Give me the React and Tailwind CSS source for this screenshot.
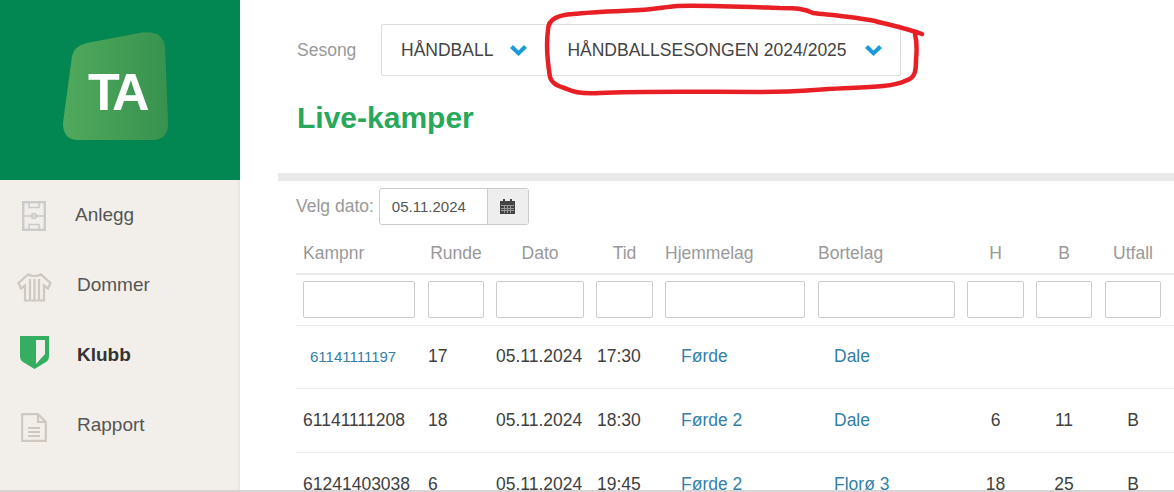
const rows = [
  { nr: '61141111197', link: true, runde: '17', dato: '05.11.2024', tid: '17:30', hjemme: 'Førde', borte: 'Dale', h: '', b: '', utfall: '', height: 'h-[63px]' },
  { nr: '61141111208', runde: '18', dato: '05.11.2024', tid: '18:30', hjemme: 'Førde 2', borte: 'Dale', h: '6', b: '11', utfall: 'B', height: 'h-[64px]' },
  { nr: '61241403038', runde: '6', dato: '05.11.2024', tid: '19:45', hjemme: 'Førde 2', borte: 'Florø 3', h: '18', b: '25', utfall: 'B', height: 'h-[64px]' },
];

const columns = [
  { label: 'Kampnr', width: 'w-[126px]', head: 'pl-[7px] text-left', pad: 'px-[7px]' },
  { label: 'Runde', width: 'w-[68px]', head: 'text-center', pad: 'px-[6px]' },
  { label: 'Dato', width: 'w-[100px]', head: 'text-center', pad: 'px-[6px]' },
  { label: 'Tid', width: 'w-[69px]', head: 'text-center', pad: 'px-[6px]' },
  { label: 'Hjemmelag', width: 'w-[153px]', head: 'pl-[6px] text-left', pad: 'pl-[6px] pr-[7px]' },
  { label: 'Bortelag', width: 'w-[149px]', head: 'pl-[6px] text-left', pad: 'px-[6px]' },
  { label: 'H', width: 'w-[69px]', head: 'text-center', pad: 'px-[6px]' },
  { label: 'B', width: 'w-[68px]', head: 'text-center', pad: 'px-[6px]' },
  { label: 'Utfall', width: 'w-[70px]', head: 'text-center', pad: 'px-[7px]' },
];

function NavItem({ icon, label, active, offset }) {
  return (
    <div className="flex h-[70px] items-center">
      <div className="flex w-[68px] justify-center">{icon}</div>
      <span className={`${offset} text-[19px] ${active ? 'font-bold text-[#333333]' : 'text-[#555555]'}`}>{label}</span>
    </div>
  );
}

function Chevron({ className }) {
  return (
    <svg width="17" height="11" viewBox="0 0 17 11" fill="#1a9bd7" className={className}>
      <path d="M0 3L3 0L8.5 5.5L14 0L17 3L8.5 11Z" />
    </svg>
  );
}

export default function App() {
  return (
    <div className="relative flex h-[492px] w-[1174px] overflow-hidden bg-white font-['Liberation_Sans',Arial,sans-serif]">
      {/* Sidebar */}
      <aside className="w-[240px] shrink-0 bg-[#f2efeb] shadow-[inset_-2px_0_2px_#e8e5e0]">
        <div className="flex h-[180px] items-center justify-center bg-[#038752] pb-[8px] pr-[9px]">
          <svg width="105" height="108" viewBox="0 0 105 108">
            <defs>
              <linearGradient id="logo" x1="0" x2="1" y1="0" y2="0">
                <stop offset="0" stopColor="#50a95c" />
                <stop offset="1" stopColor="#37924f" />
              </linearGradient>
            </defs>
            <path d="M24 11L79 0.5Q100 -2 102 15L105 91Q105 108 90 108L15 108Q0 108 0 91L9 24Q11 14 24 11Z" fill="url(#logo)" />
            <text x="25" y="78" fill="#fff" fontSize="52" fontWeight="700" letterSpacing="-4">TA</text>
          </svg>
        </div>
        <div>
          <NavItem label="Anlegg" offset="ml-[7px]" icon={
            <svg width="24" height="30" viewBox="0 0 24 30" fill="none" stroke="#cbcbcb" strokeWidth="2.4" className="mt-[2px]">
              <rect x="1.2" y="1.2" width="21.6" height="27.6" />
              <path d="M1 15H23M7 1V6.5H17V1M7 29V23.5H17V29" strokeWidth="1.6" />
              <circle cx="12" cy="15" r="2.5" strokeWidth="1.5" />
            </svg>
          } />
          <NavItem label="Dommer" offset="ml-[9px]" icon={
            <svg width="35" height="29" viewBox="0 0 35 29" fill="none" stroke="#cfc8c0" strokeWidth="2.2" className="mt-[4px]">
              <path d="M11 1.5L1.5 10L4 15.5L8 12.5V27.5H27V12.5L31 15.5L33.5 10L24 1.5C21 3.5 14 3.5 11 1.5Z" />
              <path d="M13 6V27.5M17.5 6V27.5M22 6V27.5" />
            </svg>
          } />
          <NavItem active label="Klubb" offset="ml-[9px]" icon={
            <svg width="29" height="33" viewBox="0 0 29 33" className="mb-[5px]">
              <path d="M0 0H29V20Q29 24 26 26L14.5 33L3 26Q0 24 0 20Z" fill="#36ae62" />
              <path d="M16 4H25V18L16 28Z" fill="#f2efeb" />
            </svg>
          } />
          <NavItem label="Rapport" offset="ml-[9px]" icon={
            <svg width="26" height="29" viewBox="0 0 26 29" fill="none" stroke="#cfc8c0" strokeWidth="2.2" className="mt-[4px]">
              <path d="M1.2 1.2H17L24.8 9V27.8H1.2Z" />
              <path d="M17 1.2V9H24.8M7 15H19M7 19H19M7 23H19" />
            </svg>
          } />
        </div>
      </aside>

      {/* Main */}
      <main className="flex-1 pl-[38px] pt-[24px]">
        <div className="flex items-center pl-[19px]">
          <span className="w-[84px] text-[17.5px] text-[#999999]">Sesong</span>
          <div className="flex h-[52px] w-[520px] items-center rounded-[2px] border border-[#dddddd] text-[17.5px] text-[#444444]">
            <span className="ml-[19px]">HÅNDBALL</span>
            <Chevron className="ml-[17px]" />
            <span className="ml-[40px]">HÅNDBALLSESONGEN 2024/2025</span>
            <Chevron className="ml-[18px]" />
          </div>
        </div>
        <h1 className="mt-[24px] pl-[19px] text-[30px] leading-[36px] font-bold text-[#27a85b]">Live-kamper</h1>

        <div className="mt-[37px] h-[8px] bg-[#e9e9e9]" />

        <div className="pl-[18px]">
          <div className="mt-[7px] flex items-center">
            <span className="text-[17.5px] text-[#999999]">Velg dato:</span>
            <div className="ml-[5px] flex h-[37px] w-[150px] rounded-[3px] border border-[#cccccc]">
              <span className="flex-1 pl-[12px] text-[15px] leading-[35px] text-[#555555]">05.11.2024</span>
              <span className="flex w-[41px] items-center justify-center border-l border-[#cccccc] bg-[#eeeeee]">
                <svg width="15" height="15" viewBox="0 0 15 15" fill="#444444">
                  <path d="M0 2H3V0H5V2H10V0H12V2H15V15H0Z" />
                  <path d="M1 6.5H14V7H1ZM1 9H14V9.5H1ZM1 11.5H14V12H1ZM4 6V14H4.5V6ZM7 6V14H7.5V6ZM10.5 6V14H11V6Z" fill="#eeeeee" />
                </svg>
              </span>
            </div>
          </div>

          <table className="mt-[8px] w-[878px] table-fixed border-collapse">
            <thead>
              <tr className="h-[41px] border-b-2 border-[#e9e9e9] text-[17.5px] text-[#999999]">
                {columns.map((c) => (
                  <th key={c.label} className={`${c.width} ${c.head} font-normal`}>{c.label}</th>
                ))}
                <th />
              </tr>
              <tr className="h-[51px] border-b border-[#e9e9e9]">
                {columns.map((c) => (
                  <td key={c.label} className={c.pad}>
                    <input className="block h-[37px] w-full rounded-[2px] border border-[#cccccc]" />
                  </td>
                ))}
                <td />
              </tr>
            </thead>
            <tbody className="text-[17.5px] text-[#404040]">
              {rows.map((r) => (
                <tr key={r.nr} className={`${r.height} border-b border-[#e9e9e9]`}>
                  <td className="pl-[7px]">
                    {r.link ? <span className="ml-[7px] text-[15px] text-[#337fa8]">{r.nr}</span> : r.nr}
                  </td>
                  <td className="pl-[6px]">{r.runde}</td>
                  <td className="pl-[6px]">{r.dato}</td>
                  <td className="pl-[7px]">{r.tid}</td>
                  <td className="pl-[22px] text-[#337fa8]">{r.hjemme}</td>
                  <td className="pl-[22px] text-[#337fa8]">{r.borte}</td>
                  <td className="text-center">{r.h}</td>
                  <td className="text-center">{r.b}</td>
                  <td className="text-center">{r.utfall}</td>
                  <td />
                </tr>
              ))}
            </tbody>
          </table>
        </div>
      </main>

      {/* Red marker annotation drawn over the screenshot */}
      <svg className="absolute left-0 top-0" width="1174" height="492" fill="none" stroke="#e81f25" strokeWidth="4.5" strokeLinecap="round" strokeLinejoin="round">
        <path d="M922 34C905 28 890 25 875 21C855 17 830 15 813 13C805 9 797 8 780 8C750 7 700 5 677 6C665 7 655 9 640 10C620 11 590 12 573 14C560 15 548 18 548 30C546 45 548 65 550 77C552 84 558 86 567 89C575 93 585 94 600 93C640 91 700 92 760 92C800 92 820 89 850 88C875 87 895 86 905 81C915 78 916 72 916 60C917 50 917 42 915 34" />
      </svg>

      {/* Bottom edge of the captured window */}
      <div className="absolute bottom-0 left-0 h-[2px] w-full bg-[#d5d5d5]" />
    </div>
  );
}
